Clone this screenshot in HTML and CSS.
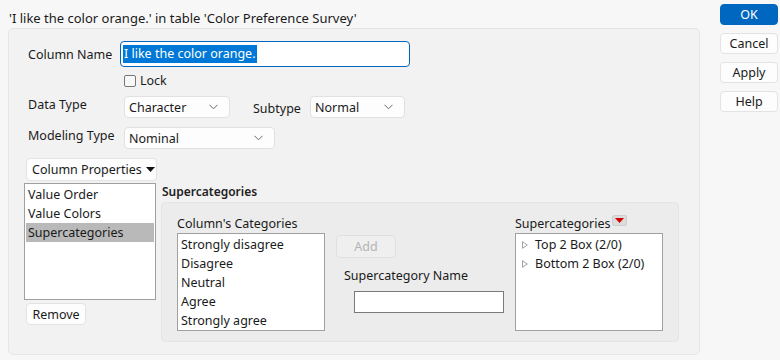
FILE: index.html
```html
<!DOCTYPE html>
<html>
<head>
<meta charset="utf-8">
<link rel="stylesheet" href="styles.css">
</head>
<body>
<div class="main">
  <div class="title">'I like the color orange.' in table 'Color Preference Survey'</div>
  <div class="panel">
    <div class="row row-name">
      <span class="label">Column Name</span>
      <div class="text-input focused"><span class="sel">I like the color orange.</span></div>
    </div>
    <div class="row row-lock">
      <span class="checkbox"></span><span class="lock-label">Lock</span>
    </div>
    <div class="row row-type">
      <span class="label label-up">Data Type</span>
      <div class="dropdown dd-char"><span>Character</span><svg class="chev" width="9" height="6" viewBox="0 0 9 6"><path d="M0.5 0.8 L4.5 4.8 L8.5 0.8" fill="none" stroke="#666" stroke-width="1"/></svg></div>
      <span class="sublabel">Subtype</span>
      <div class="dropdown dd-normal"><span>Normal</span><svg class="chev" width="9" height="6" viewBox="0 0 9 6"><path d="M0.5 0.8 L4.5 4.8 L8.5 0.8" fill="none" stroke="#666" stroke-width="1"/></svg></div>
    </div>
    <div class="row row-model">
      <span class="label label-up">Modeling Type</span>
      <div class="dropdown dd-nominal"><span>Nominal</span><svg class="chev" width="9" height="6" viewBox="0 0 9 6"><path d="M0.5 0.8 L4.5 4.8 L8.5 0.8" fill="none" stroke="#666" stroke-width="1"/></svg></div>
    </div>
    <div class="row row-props">
      <div class="btn btn-props">Column Properties <svg width="9" height="5" viewBox="0 0 9 5"><path d="M0 0 H9 L4.5 5 Z" fill="#111"/></svg></div>
    </div>
    <div class="lower">
      <div class="left-col">
        <div class="listbox props-list">
          <div class="item">Value Order</div>
          <div class="item">Value Colors</div>
          <div class="item selected">Supercategories</div>
        </div>
        <div class="btn btn-remove">Remove</div>
      </div>
      <div class="right-col">
        <div class="section-title">Supercategories</div>
        <div class="inner">
          <div class="col col-cats">
            <div class="col-label">Column's Categories</div>
            <div class="listbox cats-list">
              <div class="item">Strongly disagree</div>
              <div class="item">Disagree</div>
              <div class="item">Neutral</div>
              <div class="item">Agree</div>
              <div class="item">Strongly agree</div>
            </div>
          </div>
          <div class="col col-mid">
            <div class="btn btn-add">Add</div>
            <div class="name-label">Supercategory Name</div>
            <div class="plain-input"></div>
          </div>
          <div class="col col-sup">
            <div class="col-label">Supercategories<span class="menu-btn"><svg width="9" height="5" viewBox="0 0 9 5"><path d="M0 0 H9 L4.5 5 Z" fill="#d40000"/></svg></span></div>
            <div class="listbox sup-list">
              <div class="item tree"><svg class="tri" width="6" height="8" viewBox="0 0 6 8"><path d="M0.5 0.7 L5.3 4 L0.5 7.3 Z" fill="none" stroke="#999" stroke-width="0.9"/></svg>Top 2 Box (2/0)</div>
              <div class="item tree"><svg class="tri" width="6" height="8" viewBox="0 0 6 8"><path d="M0.5 0.7 L5.3 4 L0.5 7.3 Z" fill="none" stroke="#999" stroke-width="0.9"/></svg>Bottom 2 Box (2/0)</div>
            </div>
          </div>
        </div>
      </div>
    </div>
  </div>
</div>
<div class="side">
  <div class="btn side-btn ok">OK</div>
  <div class="btn side-btn">Cancel</div>
  <div class="btn side-btn">Apply</div>
  <div class="btn side-btn">Help</div>
</div>
</body>
</html>
```

FILE: styles.css
```css
* { box-sizing: border-box; }
html, body { margin: 0; padding: 0; }
body {
  width: 780px;
  height: 360px;
  background: #f7f7f7;
  font-family: "Noto Sans", "Open Sans", sans-serif;
  font-size: 12.5px;
  color: #1a1a1a;
  display: flex;
  overflow: hidden;
}
.main {
  width: 712px;
  padding-left: 8px;
  display: flex;
  flex-direction: column;
}
.title {
  height: 28px;
  line-height: 16px;
  padding-top: 10px;
  padding-left: 1px;
  font-size: 13px;
  white-space: nowrap;
}
.panel {
  width: 692px;
  height: 327px;
  background: #f2f2f2;
  border: 1px solid #e6e6e6;
  border-radius: 5px;
  display: flex;
  flex-direction: column;
}
.row {
  display: flex;
  align-items: center;
  flex: none;
}
.label {
  width: 111px;
  flex: none;
  padding-left: 19px;
  white-space: nowrap;
}
.label-up { position: relative; top: -3px; }
.row-name { margin-top: 12px; height: 26px; }
.text-input {
  width: 290px;
  height: 26px;
  background: #fff;
  border: 1px solid #0067c0;
  border-radius: 4px;
  display: flex;
  align-items: center;
  padding-left: 2px;
}
.sel {
  background: #0078d7;
  color: #fff;
  line-height: 18px;
  padding: 0 1px;
}
.row-lock { margin-top: 5px; height: 17px; padding-left: 115px; }
.checkbox {
  width: 12px;
  height: 12px;
  border: 1px solid #777;
  border-radius: 2px;
  background: #f8f8f8;
}
.lock-label { margin-left: 4px; }
.row-type { margin-top: 7px; height: 22px; }
.dropdown {
  height: 22px;
  flex: none;
  background: #fdfdfd;
  border: 1px solid #e1e1e1;
  border-radius: 4px;
  display: flex;
  align-items: center;
  justify-content: space-between;
  padding: 0 11px 0 4px;
  margin-left: 4px;
}
.dd-char { width: 106px; }
.sublabel { margin-left: 23px; width: 57px; position: relative; top: 1px; }
.dd-normal { width: 95px; margin-left: 0; }
.row-model { margin-top: 9px; height: 22px; }
.dd-nominal { width: 151px; }
.row-props { margin-top: 9px; height: 23px; padding-left: 17px; }
.btn {
  background: #fdfdfd;
  border: 1px solid #e3e3e3;
  border-radius: 4px;
  display: flex;
  align-items: center;
  justify-content: center;
  white-space: nowrap;
}
.btn-props {
  width: 131px;
  height: 23px;
  justify-content: flex-start;
  padding-left: 5px;
  gap: 4px;
}
.lower {
  display: flex;
  margin-top: 2px;
  padding-left: 15px;
}
.left-col { width: 132px; display: flex; flex-direction: column; }
.listbox {
  background: #fff;
  border: 1px solid #a0a0a0;
  padding: 1px 1px;
}
.item {
  height: 19px;
  line-height: 19px;
  padding-left: 2px;
  white-space: nowrap;
}
.props-list { height: 117px; }
.selected { background: #b9b9b9; }
.btn-remove { width: 60px; height: 22px; margin-top: 3px; margin-left: 2px; }
.right-col { margin-left: 5px; display: flex; flex-direction: column; }
.section-title {
  height: 19px;
  line-height: 18px;
  padding-left: 1px;
  font-size: 12px;
  font-weight: 600;
  color: #222;
}
.inner {
  width: 518px;
  height: 140px;
  background: #ececec;
  border: 1px solid #e4e4e4;
  border-radius: 4px;
  display: flex;
  padding-left: 15px;
}
.col { display: flex; flex-direction: column; }
.col-label {
  height: 30px;
  padding-top: 13px;
  line-height: 16px;
  display: flex;
  align-items: flex-start;
  white-space: nowrap;
}
.cats-list, .sup-list { width: 148px; height: 98px; }
.col-mid { width: 190px; padding-left: 11px; }
.btn-add {
  width: 60px;
  height: 23px;
  margin-top: 32px;
  color: #b4b4b4;
  background: #efefef;
  border-color: #e0e0e0;
}
.name-label { margin-top: 10px; padding-left: 8px; line-height: 16px; white-space: nowrap; }
.plain-input {
  width: 150px;
  height: 22px;
  margin-top: 7px;
  margin-left: 18px;
  background: #fff;
  border: 1px solid #7a7a7a;
}
.menu-btn {
  width: 15px;
  height: 11px;
  margin-left: 1px;
  margin-top: -1px;
  background: #dcdcdc;
  border: 1px solid #cfcfcf;
  border-radius: 2px;
  display: flex;
  align-items: center;
  justify-content: center;
}
.tree { display: flex; align-items: center; padding-left: 5px; }
.tri { margin-right: 7px; }
.side {
  width: 68px;
  padding-left: 8px;
  padding-top: 4px;
  display: flex;
  flex-direction: column;
  gap: 8px;
}
.side-btn { width: 58px; height: 21px; }
.ok { background: #0067c0; border-color: #0067c0; color: #fff; }
```
